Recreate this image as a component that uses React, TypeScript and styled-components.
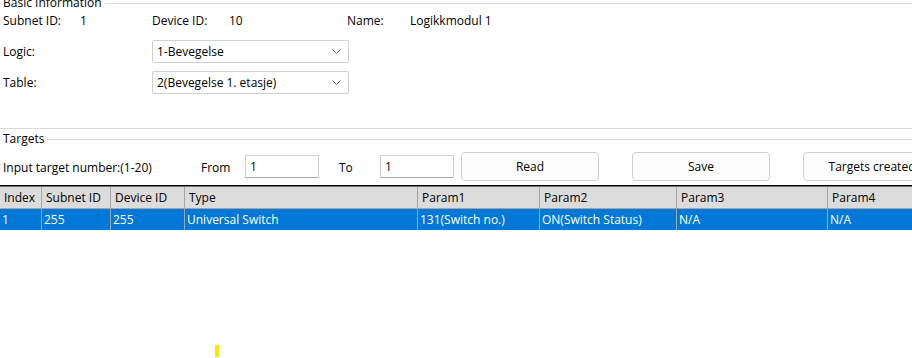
import React from 'react'
import styled, { createGlobalStyle } from 'styled-components'

const GlobalStyle = createGlobalStyle`
  html, body {
    margin: 0;
    padding: 0;
    background: #ffffff;
  }
  body {
    font-family: 'Open Sans', 'Noto Sans', sans-serif;
    font-size: 12px;
    color: #000000;
  }
`

interface Column {
  title: string
  width: number
}

const columns: Column[] = [
  { title: 'Index', width: 42 },
  { title: 'Subnet ID', width: 69 },
  { title: 'Device ID', width: 74 },
  { title: 'Type', width: 233 },
  { title: 'Param1', width: 122 },
  { title: 'Param2', width: 137 },
  { title: 'Param3', width: 151 },
  { title: 'Param4', width: 120 },
]

const rows = [
  ['1', '255', '255', 'Universal Switch', '131(Switch no.)', 'ON(Switch Status)', 'N/A', 'N/A'],
]

const gridTemplate = columns.map(c => `${c.width}px`).join(' ')

const App: React.FC = () => {
  return (
    <>
      <GlobalStyle />
      <Window>
        <BasicGroup>
          <GroupHead>
            <GroupTitle>Basic Information</GroupTitle>
            <GroupRule />
          </GroupHead>
          <InfoRow>
            <span>Subnet ID:</span>
            <span>1</span>
            <span>Device ID:</span>
            <span>10</span>
            <span>Name:</span>
            <span>Logikkmodul 1</span>
          </InfoRow>
          <FormRow>
            <FormLabel>Logic:</FormLabel>
            <Select>
              <span>1-Bevegelse</span>
              <Chevron />
            </Select>
          </FormRow>
          <FormRow>
            <FormLabel>Table:</FormLabel>
            <Select>
              <span>2(Bevegelse 1. etasje)</span>
              <Chevron />
            </Select>
          </FormRow>
        </BasicGroup>

        <TargetsGroup>
          <GroupHead>
            <GroupTitle>Targets</GroupTitle>
            <GroupRule />
          </GroupHead>
          <ControlRow>
            <ControlLabel width={198}>Input target number:(1-20)</ControlLabel>
            <ControlLabel width={44}>From</ControlLabel>
            <TextBox>1</TextBox>
            <ControlLabel width={41} indent={20}>To</ControlLabel>
            <TextBox>1</TextBox>
            <Button gap={7}>Read</Button>
            <Button gap={33}>Save</Button>
            <Button gap={33}>Targets created</Button>
          </ControlRow>
        </TargetsGroup>

        <Grid>
          <HeaderRow>
            {columns.map(c => (
              <HeaderCell key={c.title}>{c.title}</HeaderCell>
            ))}
          </HeaderRow>
          {rows.map((r, i) => (
            <DataRow key={i} selected>
              {r.map((v, j) => (
                <DataCell key={j}>{v}</DataCell>
              ))}
            </DataRow>
          ))}
        </Grid>

        <Caret />
      </Window>
    </>
  )
}

const Chevron: React.FC = () => (
  <ChevronSvg width="9" height="5" viewBox="0 0 9 5">
    <polyline points="0.5,0.5 4.5,4.5 8.5,0.5" fill="none" stroke="#606060" strokeWidth="1" />
  </ChevronSvg>
)

const Window = styled.div`
  position: relative;
  width: 912px;
  height: 358px;
  overflow: hidden;
  background: #ffffff;
`

const BasicGroup = styled.div`
  display: flex;
  flex-direction: column;
  height: 134px;
  margin-top: -5px;
  border-bottom: 1px solid #dcdcdc;
  box-sizing: border-box;
`

const GroupHead = styled.div`
  display: flex;
  align-items: center;
  height: 16px;
  padding-left: 3px;
`

const GroupTitle = styled.span`
  line-height: 16px;
  margin-right: 3px;
`

const GroupRule = styled.div`
  flex: 1;
  height: 1px;
  background: #dcdcdc;
`

const InfoRow = styled.div`
  display: grid;
  grid-template-columns: 77px 72px 77px 118px 63px auto;
  height: 18px;
  align-items: center;
  padding-left: 3px;
`

const FormRow = styled.div`
  display: flex;
  align-items: center;
  padding-left: 3px;
  margin-top: 11px;
  & + & {
    margin-top: 8px;
  }
`

const FormLabel = styled.span`
  width: 149px;
`

const Select = styled.div`
  display: flex;
  align-items: center;
  justify-content: space-between;
  width: 197px;
  height: 23px;
  box-sizing: border-box;
  padding: 0 7px 0 4px;
  border: 1px solid #d0d0d0;
  border-radius: 2px;
  background: #ffffff;
`

const ChevronSvg = styled.svg`
  display: block;
`

const TargetsGroup = styled.div`
  display: flex;
  flex-direction: column;
  margin-top: 2px;
`

const ControlRow = styled.div`
  display: flex;
  align-items: center;
  height: 30px;
  margin-top: 4px;
  padding-left: 3px;
  white-space: nowrap;
`

const ControlLabel = styled.span<{ width: number; indent?: number }>`
  width: ${p => p.width}px;
  margin-left: ${p => p.indent || 0}px;
  padding-top: 2px;
  flex-shrink: 0;
`

const TextBox = styled.div`
  width: 74px;
  height: 23px;
  box-sizing: border-box;
  flex-shrink: 0;
  padding: 2px 4px;
  border: 1px solid #cfcfcf;
  border-bottom-color: #a8a8a8;
  background: #ffffff;
`

const Button = styled.div<{ gap: number }>`
  display: flex;
  align-items: center;
  justify-content: center;
  flex-shrink: 0;
  width: 138px;
  height: 29px;
  box-sizing: border-box;
  margin-left: ${p => p.gap}px;
  border: 1px solid #d0d0d0;
  border-radius: 4px;
  background: #fdfdfd;
`

const Grid = styled.div`
  display: flex;
  flex-direction: column;
  margin-top: 4px;
  border-top: 1px solid #000000;
  box-shadow: inset 0 1px 0 #707070;
`

const HeaderRow = styled.div`
  display: grid;
  grid-template-columns: ${gridTemplate};
  height: 21px;
  margin-top: 1px;
  background: #dcdcdc;
`

const HeaderCell = styled.div`
  display: flex;
  align-items: center;
  padding-left: 4px;
  border-right: 1px solid #a5a5a5;
  white-space: nowrap;
  &:last-child {
    border-right: none;
  }
`

const DataRow = styled.div<{ selected?: boolean }>`
  display: grid;
  grid-template-columns: ${gridTemplate};
  height: 22px;
  background: ${p => (p.selected ? '#0078d7' : '#ffffff')};
  color: ${p => (p.selected ? '#ffffff' : '#000000')};
  border-top: 1px solid #a5a5a5;
  box-sizing: border-box;
`

const DataCell = styled.div`
  display: flex;
  align-items: center;
  padding-left: 2px;
  border-right: 1px solid #a5a5a5;
  white-space: nowrap;
  &:last-child {
    border-right: none;
  }
`

const Caret = styled.div`
  position: absolute;
  left: 215px;
  top: 345px;
  width: 4px;
  height: 12px;
  background: #ffe400;
`

export default App
